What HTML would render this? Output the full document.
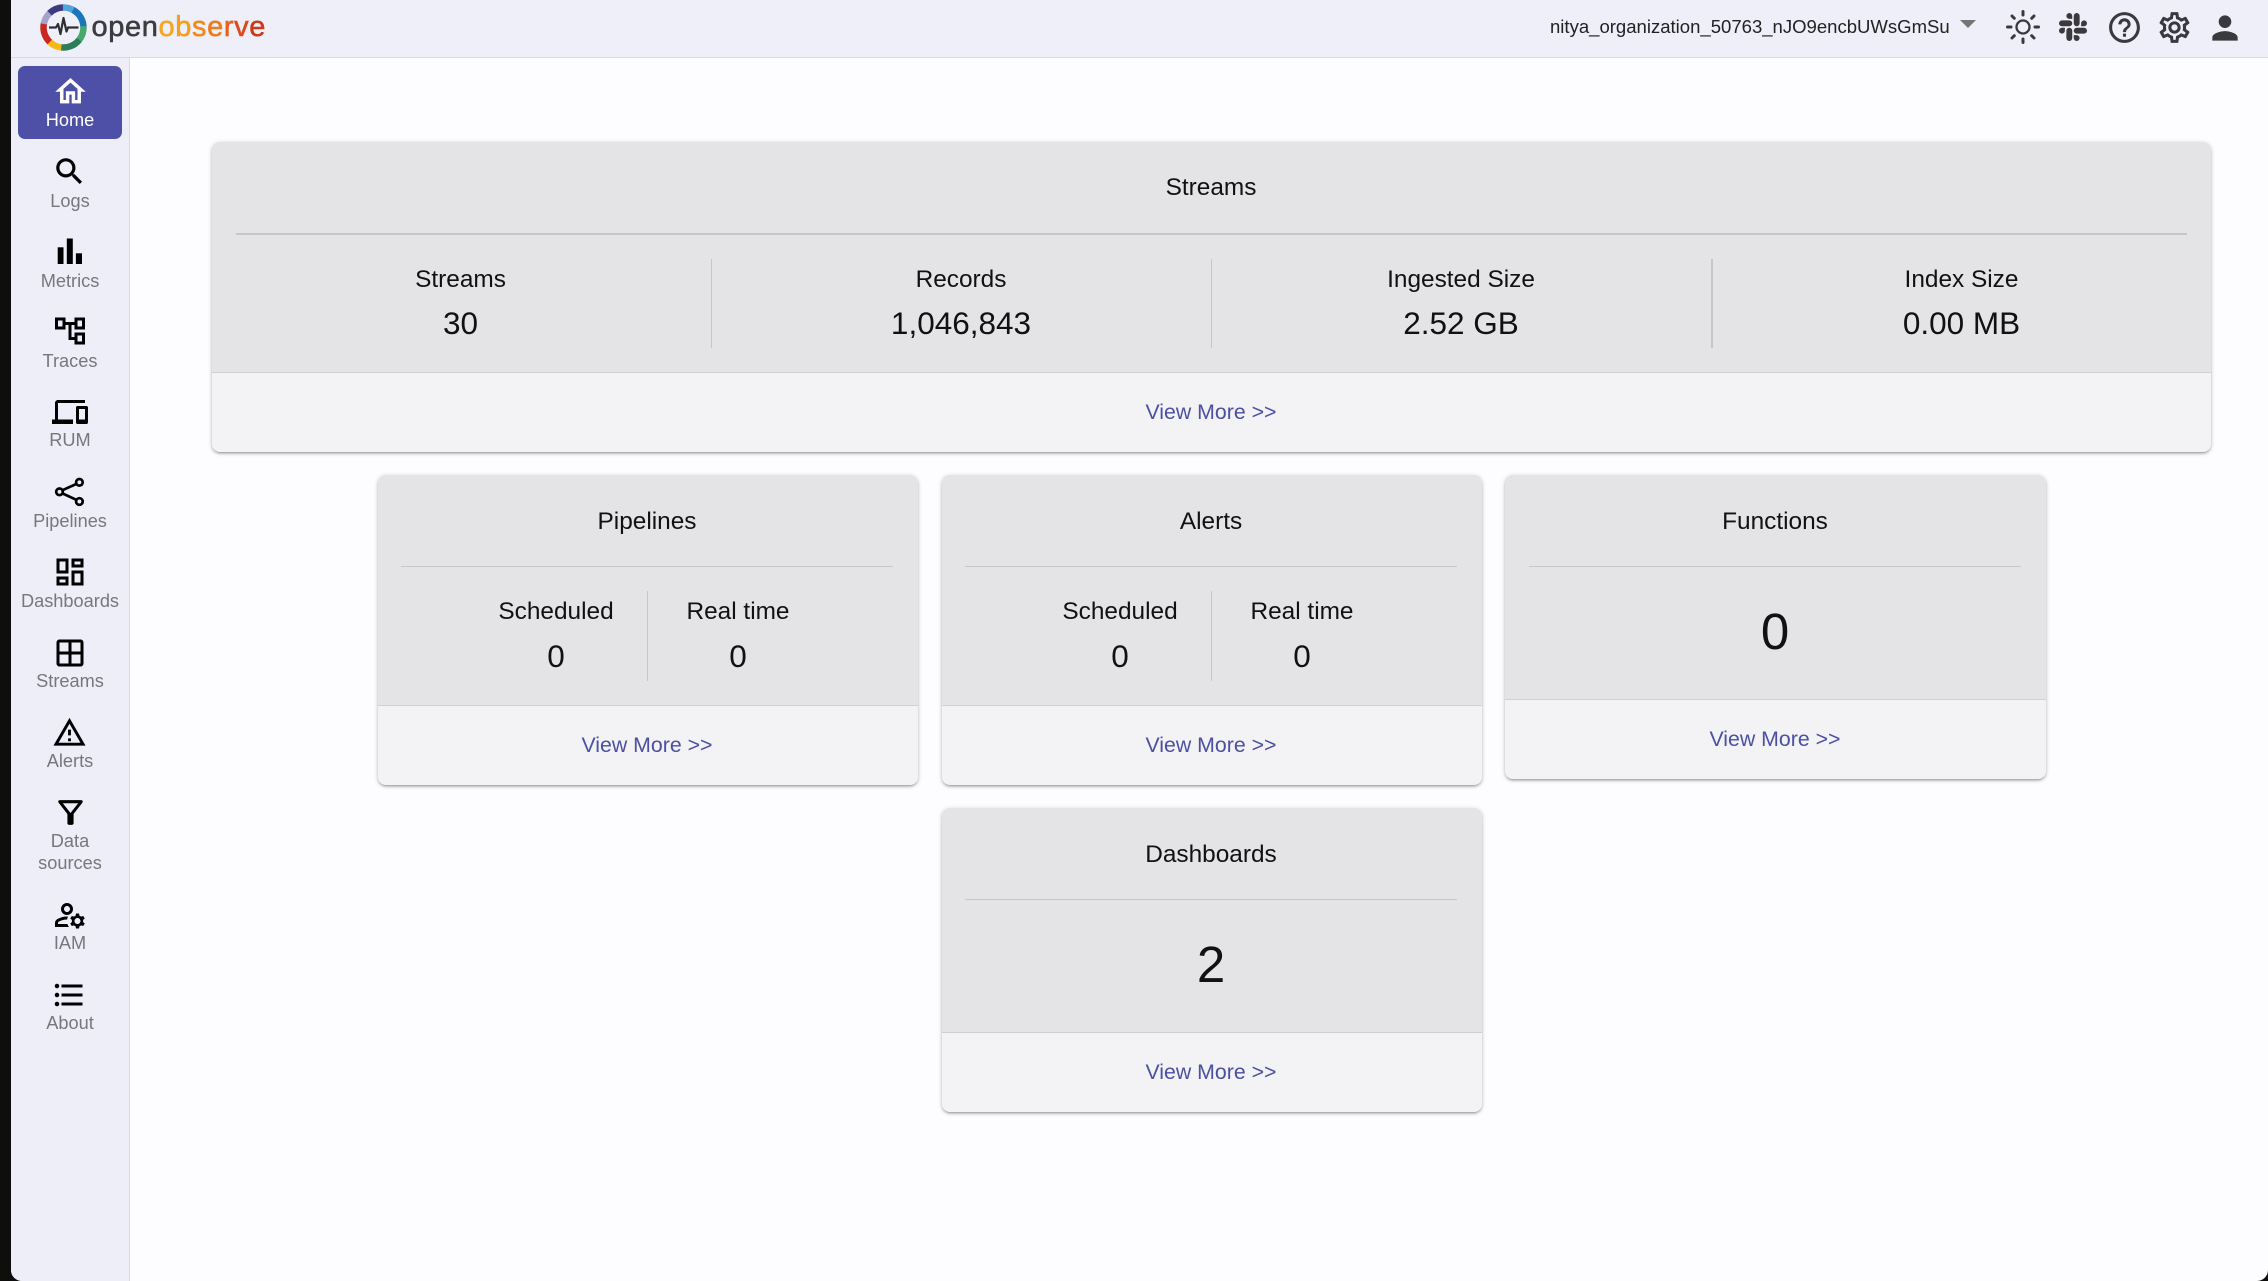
<!DOCTYPE html>
<html lang="en"><head><meta charset="utf-8"><title>OpenObserve</title>
<style>
html,body{margin:0;padding:0;width:2268px;height:1281px;overflow:hidden;background:#0e0f0d;font-family:"Liberation Sans",sans-serif}
#app{position:absolute;left:10.5px;top:0;width:2257.5px;height:1281px;background:#fdfcfe;border-radius:0 0 11px 11px;overflow:hidden}
#root{position:absolute;left:-10.5px;top:0;width:2268px;height:1281px}
#hdr{position:absolute;left:0;top:0;width:2268px;height:57px;background:#eeeff8;border-bottom:1.5px solid #d9d9de}
#side{position:absolute;left:0;top:58px;width:129px;height:1223px;background:#edeef8;border-right:1.5px solid #d9d9de}
#act{position:absolute;left:18px;top:66px;width:103.5px;height:72.5px;background:#4d50a6;border-radius:7px}
svg{position:absolute;display:block}
.t{position:absolute;white-space:nowrap;transform:translateX(-50%);text-align:center;color:#111}
.n{font-size:18.2px;line-height:22px;height:22px;color:#77777d}
.card{position:absolute;background:#e4e3e6;border-radius:8px;box-shadow:0 1px 5px rgba(0,0,0,.2),0 2px 2px rgba(0,0,0,.14),0 3px 1px -2px rgba(0,0,0,.12)}
.foot{position:absolute;left:0;right:0;bottom:0;background:#f3f3f5;border-top:1.5px solid #d0cfd3;border-radius:0 0 8px 8px;box-sizing:border-box}
.h{position:absolute;height:1.5px;background:#c6c5c9}
.v{position:absolute;width:1.5px;background:#c6c5c9}
.l{font-size:24.4px;line-height:40px;height:40px;color:#111}
.d{font-size:31.5px;line-height:40px;height:40px;color:#111}
.b{font-size:51px;line-height:60px;height:60px;color:#111}
.m{font-size:21.3px;line-height:30px;height:30px;color:#4b50a2}
</style></head><body>
<div id="app"><div id="root">
<div id="hdr"></div>
<div id="side"></div>
<div id="act"></div>

<!-- logo -->
<svg style="left:36px;top:0" width="56" height="56" viewBox="36 0 56 56" fill="none">
<g stroke-width="6.5">
<circle cx="63.5" cy="27.5" r="20" stroke="#3c3a80" pathLength="360" stroke-dasharray="44 316" transform="rotate(-134 63.5 27.5)"/>
<circle cx="63.5" cy="27.5" r="20" stroke="#4fa6dc" pathLength="360" stroke-dasharray="30 330" transform="rotate(-90 63.5 27.5)"/>
<circle cx="63.5" cy="27.5" r="20" stroke="#1b75bb" pathLength="360" stroke-dasharray="58 302" transform="rotate(-60 63.5 27.5)"/>
<circle cx="63.5" cy="27.5" r="20" stroke="#46a86c" pathLength="360" stroke-dasharray="42 318" transform="rotate(-2 63.5 27.5)"/>
<circle cx="63.5" cy="27.5" r="20" stroke="#2e7d5a" pathLength="360" stroke-dasharray="58 302" transform="rotate(40 63.5 27.5)"/>
<circle cx="63.5" cy="27.5" r="20" stroke="#f6b81a" pathLength="360" stroke-dasharray="37 323" transform="rotate(98 63.5 27.5)"/>
<circle cx="63.5" cy="27.5" r="20" stroke="#c9281e" pathLength="360" stroke-dasharray="57 303" transform="rotate(135 63.5 27.5)"/>
<circle cx="63.5" cy="27.5" r="20" stroke="#a3a3cc" pathLength="360" stroke-dasharray="34 326" transform="rotate(192 63.5 27.5)"/>
</g>
<path d="M49 27.5H56L58 24l2.5 10 3-16 3 13.5 1.500-4H78.500" stroke="#2f2f33" stroke-width="2.200" stroke-linejoin="round"/>
</svg>
<div style="position:absolute;left:91.5px;top:6px;font-size:29px;line-height:42px;letter-spacing:.62px;color:#3c3c3e;white-space:nowrap;-webkit-text-stroke:.55px currentColor">open<span style="color:#f5a623">o</span><span style="color:#f3a01e">b</span><span style="color:#f08a1e">s</span><span style="color:#ee7a1f">e</span><span style="color:#e8601c">r</span><span style="color:#dd4a1a">v</span><span style="color:#cc3a17">e</span></div>

<!-- header right -->
<div style="position:absolute;left:1550px;top:14px;font-size:18.55px;line-height:26px;color:#222;white-space:nowrap">nitya_organization_50763_nJO9encbUWsGmSu</div>
<svg style="left:1960px;top:20px" width="16" height="8" viewBox="0 0 16 8"><path d="M0 0h16L8 8z" fill="#757575"/></svg>
<svg style="left:2005px;top:9px" width="36" height="36" viewBox="0 0 36 36" fill="none" stroke="#3a3a3e" stroke-linecap="round"><circle cx="18" cy="18" r="6.500" stroke-width="2.300"/><g stroke-width="3"><path d="M18 2.500v3.500M18 30v3.500M2.500 18H6M30 18h3.500M7 7l2.300 2.300M26.700 26.700L29 29M7 29l2.300-2.300M26.700 9.300L29 7"/></g></svg>
<svg style="left:2059px;top:13px" width="28" height="28" viewBox="0 0 24 24" fill="#3a3a3e"><path d="M5.042 15.165a2.528 2.528 0 0 1-2.52 2.523A2.528 2.528 0 0 1 0 15.165a2.527 2.527 0 0 1 2.522-2.52h2.52v2.52zM6.313 15.165a2.527 2.527 0 0 1 2.521-2.52 2.527 2.527 0 0 1 2.521 2.52v6.313A2.528 2.528 0 0 1 8.834 24a2.528 2.528 0 0 1-2.521-2.522v-6.313zM8.834 5.042a2.528 2.528 0 0 1-2.521-2.52A2.528 2.528 0 0 1 8.834 0a2.528 2.528 0 0 1 2.521 2.522v2.52H8.834zM8.834 6.313a2.528 2.528 0 0 1 2.521 2.521 2.528 2.528 0 0 1-2.521 2.521H2.522A2.528 2.528 0 0 1 0 8.834a2.528 2.528 0 0 1 2.522-2.521h6.312zM18.956 8.834a2.528 2.528 0 0 1 2.522-2.521A2.528 2.528 0 0 1 24 8.834a2.528 2.528 0 0 1-2.522 2.521h-2.522V8.834zM17.688 8.834a2.528 2.528 0 0 1-2.523 2.521 2.527 2.527 0 0 1-2.52-2.521V2.522A2.527 2.527 0 0 1 15.165 0a2.528 2.528 0 0 1 2.523 2.522v6.312zM15.165 18.956a2.528 2.528 0 0 1 2.523 2.522A2.528 2.528 0 0 1 15.165 24a2.527 2.527 0 0 1-2.52-2.522v-2.522h2.52zM15.165 17.688a2.527 2.527 0 0 1-2.52-2.523 2.526 2.526 0 0 1 2.52-2.52h6.313A2.527 2.527 0 0 1 24 15.165a2.528 2.528 0 0 1-2.522 2.523h-6.313z"/></svg>
<svg style="left:2106px;top:9px" width="37" height="37" viewBox="0 0 24 24" fill="#3a3a3e"><path d="M11 18h2v-2h-2v2zm1-16C6.480 2 2 6.480 2 12s4.480 10 10 10 10-4.480 10-10S17.520 2 12 2zm0 18c-4.410 0-8-3.590-8-8s3.590-8 8-8 8 3.590 8 8-3.590 8-8 8zm0-14c-2.210 0-4 1.790-4 4h2c0-1.100.9-2 2-2s2 .9 2 2c0 2-3 1.750-3 5h2c0-2.250 3-2.500 3-5 0-2.210-1.790-4-4-4z"/></svg>
<svg style="left:2156px;top:9px" width="37" height="37" viewBox="0 0 24 24" fill="#3a3a3e"><path d="M19.43 12.98c.04-.32.07-.64.07-.98 0-.34-.03-.66-.07-.98l2.11-1.65c.19-.15.24-.42.12-.64l-2-3.46c-.09-.16-.26-.25-.44-.25-.06 0-.12.01-.17.03l-2.49 1c-.52-.4-1.08-.73-1.69-.98l-.38-2.65C14.46 2.18 14.25 2 14 2h-4c-.25 0-.46.18-.49.42l-.38 2.65c-.61.25-1.17.59-1.69.98l-2.49-1c-.06-.02-.12-.03-.18-.03-.17 0-.34.09-.43.25l-2 3.46c-.13.22-.07.49.12.64l2.11 1.65c-.04.32-.07.65-.07.98 0 .33.03.66.07.98l-2.11 1.65c-.19.15-.24.42-.12.64l2 3.46c.09.16.26.25.44.25.06 0 .12-.01.17-.03l2.49-1c.52.4 1.08.73 1.69.98l.38 2.65c.03.24.24.42.49.42h4c.25 0 .46-.18.49-.42l.38-2.65c.61-.25 1.17-.59 1.69-.98l2.49 1c.06.02.12.03.18.03.17 0 .34-.09.43-.25l2-3.46c.12-.22.07-.49-.12-.64l-2.11-1.65zm-1.98-1.71c.04.31.05.52.05.73 0 .21-.02.43-.05.73l-.14 1.13.89.7 1.08.84-.7 1.21-1.27-.51-1.04-.42-.9.68c-.43.32-.84.56-1.25.73l-1.06.43-.16 1.13-.2 1.35h-1.4l-.19-1.35-.16-1.13-1.06-.43c-.43-.18-.83-.41-1.23-.71l-.91-.7-1.06.43-1.27.51-.7-1.21 1.08-.84.89-.7-.14-1.13c-.03-.31-.05-.54-.05-.74s.02-.43.05-.73l.14-1.13-.89-.7-1.08-.84.7-1.21 1.27.51 1.04.42.9-.68c.43-.32.84-.56 1.25-.73l1.06-.43.16-1.13.2-1.35h1.39l.19 1.35.16 1.13 1.06.43c.43.18.83.41 1.23.71l.91.7 1.06-.43 1.27-.51.7 1.21-1.07.85-.89.7.14 1.13zM12 8c-2.21 0-4 1.79-4 4s1.79 4 4 4 4-1.79 4-4-1.790-4-4-4zm0 6c-1.100 0-2-.9-2-2s.9-2 2-2 2 .9 2 2-.9 2-2 2z"/></svg>
<svg style="left:2206px;top:8.500px" width="38" height="38" viewBox="0 0 24 24" fill="#3a3a3e"><path d="M12 12c2.210 0 4-1.790 4-4s-1.790-4-4-4-4 1.790-4 4 1.790 4 4 4zm0 2c-2.670 0-8 1.340-8 4v2h16v-2c0-2.660-5.330-4-8-4z"/></svg>

<!-- nav icons -->
<svg style="left:52.500px;top:74px" width="35" height="35" viewBox="0 0 24 24" fill="#fff" stroke="#fff" stroke-width=".35"><path d="M12 5.690l5 4.500V18h-2v-6H9v6H7v-7.810l5-4.500M12 3L2 12h3v8h6v-6h2v6h6v-8h3L12 3z"/></svg>
<svg style="left:52px;top:153.700px" width="35" height="35" viewBox="0 0 24 24" fill="#000" stroke="#000" stroke-width=".2"><path d="M15.500 14h-.79l-.28-.27C15.410 12.590 16 11.110 16 9.500 16 5.910 13.090 3 9.500 3S3 5.910 3 9.500 5.910 16 9.500 16c1.610 0 3.090-.59 4.230-1.570l.27.28v.79l5 4.990L20.490 19l-4.990-5zm-6 0C7.010 14 5 11.990 5 9.500S7.010 5 9.500 5 14 7.010 14 9.500 11.990 14 9.500 14z"/></svg>
<svg style="left:50px;top:231px" width="40" height="40" viewBox="50 231 40 40" fill="#000"><rect x="57.700" y="247.300" width="5.800" height="16.700"/><rect x="66.800" y="238.500" width="6" height="25.500"/><rect x="75.900" y="253.300" width="6.100" height="10.700"/></svg>
<svg style="left:52px;top:313px" width="36" height="36" viewBox="0 0 24 24" fill="#000"><path d="M22 11V3h-7v3H9V3H2v8h7V8h2v10h4v3h7v-8h-7v3h-2V8h2v3h7zM7 9H4V5h3v4zm10 6h3v4h-3v-4zm0-10h3v4h-3V5z"/></svg>
<svg style="left:52px;top:394px" width="36" height="36" viewBox="0 0 24 24" fill="#000"><path d="M4 6h18V4H4c-1.100 0-2 .9-2 2v11H0v3h14v-3H4V6zm19 2h-6c-.55 0-1 .45-1 1v10c0 .55.45 1 1 1h6c.55 0 1-.45 1-1V9c0-.55-.45-1-1-1zm-1 9h-4v-7h4v7z"/></svg>
<svg style="left:50px;top:472px" width="40" height="40" viewBox="50 472 40 40" fill="none" stroke="#000" stroke-width="2.700"><circle cx="59.500" cy="491.800" r="3.300"/><circle cx="79.400" cy="482.300" r="3.300"/><circle cx="79.400" cy="501.500" r="3.300"/><path d="M62.500 490.200L76.300 484M62.500 493.400L76.300 499.800"/></svg>
<svg style="left:52px;top:554px" width="36" height="36" viewBox="0 0 24 24" fill="#000"><path d="M19 5v2h-4V5h4M9 5v6H5V5h4m10 8v6h-4v-6h4M9 17v2H5v-2h4M21 3h-8v6h8V3zM11 3H3v10h8V3zm10 8h-8v10h8V11zm-10 4H3v6h8v-6z"/></svg>
<svg style="left:52px;top:634.500px" width="36" height="36" viewBox="0 0 24 24" fill="#000"><path d="M19 3H5c-1.100 0-2 .9-2 2v14c0 1.100.9 2 2 2h14c1.100 0 2-.9 2-2V5c0-1.100-.9-2-2-2zm-8 16H5v-6h6v6zm0-8H5V5h6v6zm8 8h-6v-6h6v6zm0-8h-6V5h6v6z"/></svg>
<svg style="left:52px;top:714.700px" width="35" height="35" viewBox="0 0 24 24" fill="#000"><path d="M12 5.990L19.530 19H4.470L12 5.990M12 2L1 21h22L12 2zm1 14h-2v2h2v-2zm0-6h-2v4h2v-4z"/></svg>
<svg style="left:51.500px;top:794px" width="37" height="37" viewBox="0 0 24 24" fill="#000"><path d="M7 6h10l-5.010 6.300L7 6zm-2.750-.39C6.270 8.200 10 13 10 13v6c0 .55.45 1 1 1h2c.55 0 1-.45 1-1v-6s3.720-4.800 5.740-7.390c.51-.66.04-1.610-.79-1.610H5.040c-.83 0-1.300.95-.79 1.610z"/></svg>
<svg style="left:52px;top:897px" width="36" height="36" viewBox="0 0 24 24" fill="#000"><path d="M4 18v-.65c0-.34.16-.66.41-.81C6.100 15.530 8.030 15 10 15c.03 0 .05 0 .08.01.1-.7.3-1.370.59-1.980-.22-.02-.44-.03-.67-.03-2.420 0-4.680.67-6.610 1.820-.88.52-1.390 1.500-1.390 2.530V20h9.260c-.42-.6-.75-1.280-.97-2H4zM10 12c2.210 0 4-1.790 4-4s-1.790-4-4-4-4 1.790-4 4 1.790 4 4 4zm0-6c1.100 0 2 .9 2 2s-.9 2-2 2-2-.9-2-2 .9-2 2-2z"/><path d="M20.750 16c0-.22-.03-.42-.06-.63l1.140-1.010-1-1.730-1.450.49c-.32-.27-.68-.48-1.080-.63L18 11h-2l-.3 1.490c-.4.15-.76.36-1.080.63l-1.450-.49-1 1.730 1.140 1.010c-.03.21-.06.41-.06.63s.03.42.06.63l-1.140 1.010 1 1.730 1.450-.49c.32.27.68.48 1.080.63L16 21h2l.3-1.490c.4-.15.76-.36 1.080-.63l1.450.49 1-1.730-1.140-1.010c.03-.21.06-.41.06-.63zM17 18c-1.100 0-2-.9-2-2s.9-2 2-2 2 .9 2 2-.9 2-2 2z"/></svg>
<svg style="left:51.400px;top:976.700px" width="36" height="36" viewBox="0 0 24 24" fill="#000"><path d="M4 10.500c-.83 0-1.500.67-1.500 1.500s.67 1.500 1.500 1.500 1.500-.67 1.500-1.500-.67-1.500-1.500-1.500zm0-6c-.83 0-1.500.67-1.500 1.500S3.170 7.500 4 7.500 5.500 6.830 5.500 6 4.830 4.500 4 4.500zm0 12c-.83 0-1.500.68-1.500 1.500s.68 1.500 1.500 1.500 1.500-.68 1.500-1.500-.67-1.500-1.500-1.500zM7 19h14v-2H7v2zm0-6h14v-2H7v2zm0-8v2h14V5H7z"/></svg>

<!-- nav labels -->
<div class="t n" style="left:70px;top:109px;color:#fff">Home</div>
<div class="t n" style="left:70px;top:189.500px">Logs</div>
<div class="t n" style="left:70px;top:270px">Metrics</div>
<div class="t n" style="left:70px;top:349.500px">Traces</div>
<div class="t n" style="left:70px;top:429px">RUM</div>
<div class="t n" style="left:70px;top:510px">Pipelines</div>
<div class="t n" style="left:70px;top:590px">Dashboards</div>
<div class="t n" style="left:70px;top:670px">Streams</div>
<div class="t n" style="left:70px;top:750px">Alerts</div>
<div class="t n" style="left:70px;top:830px">Data</div>
<div class="t n" style="left:70px;top:852px">sources</div>
<div class="t n" style="left:70px;top:932px">IAM</div>
<div class="t n" style="left:70px;top:1012px">About</div>

<!-- cards -->
<div class="card" style="left:211.500px;top:142px;width:1999.500px;height:309.500px"><div class="foot" style="height:79.500px"></div></div>
<div class="h" style="left:236px;top:233px;width:1951px"></div>
<div class="v" style="left:710.500px;top:258.500px;height:89px"></div>
<div class="v" style="left:1210.500px;top:258.500px;height:89px"></div>
<div class="v" style="left:1711px;top:258.500px;height:89px"></div>
<div class="t l" style="left:1211px;top:168px">Streams</div>
<div class="t l" style="left:460.500px;top:259.500px">Streams</div>
<div class="t d" style="left:460.500px;top:303px">30</div>
<div class="t l" style="left:961px;top:259.500px">Records</div>
<div class="t d" style="left:961px;top:303px">1,046,843</div>
<div class="t l" style="left:1461px;top:259.500px">Ingested Size</div>
<div class="t d" style="left:1461px;top:303px">2.52 GB</div>
<div class="t l" style="left:1961.500px;top:259.500px">Index Size</div>
<div class="t d" style="left:1961.500px;top:303px">0.00 MB</div>
<div class="t m" style="left:1211px;top:397px">View More &gt;&gt;</div>

<div class="card" style="left:377.500px;top:475px;width:540px;height:309.500px"><div class="foot" style="height:79.500px"></div></div>
<div class="h" style="left:401px;top:565.500px;width:492px"></div>
<div class="v" style="left:646.700px;top:591px;height:90px"></div>
<div class="t l" style="left:647px;top:501.500px">Pipelines</div>
<div class="t l" style="left:556px;top:592px">Scheduled</div>
<div class="t d" style="left:556px;top:636px">0</div>
<div class="t l" style="left:738px;top:592px">Real time</div>
<div class="t d" style="left:738px;top:636px">0</div>
<div class="t m" style="left:647px;top:730px">View More &gt;&gt;</div>

<div class="card" style="left:941.500px;top:475px;width:540px;height:309.500px"><div class="foot" style="height:79.500px"></div></div>
<div class="h" style="left:965px;top:565.500px;width:492px"></div>
<div class="v" style="left:1210.500px;top:591px;height:90px"></div>
<div class="t l" style="left:1211px;top:501.500px">Alerts</div>
<div class="t l" style="left:1120px;top:592px">Scheduled</div>
<div class="t d" style="left:1120px;top:636px">0</div>
<div class="t l" style="left:1302px;top:592px">Real time</div>
<div class="t d" style="left:1302px;top:636px">0</div>
<div class="t m" style="left:1211px;top:730px">View More &gt;&gt;</div>

<div class="card" style="left:1505px;top:475px;width:540.500px;height:304px"><div class="foot" style="height:80px"></div></div>
<div class="h" style="left:1529px;top:565.500px;width:492px"></div>
<div class="t l" style="left:1775px;top:501.500px">Functions</div>
<div class="t b" style="left:1775px;top:601.500px">0</div>
<div class="t m" style="left:1775px;top:724px">View More &gt;&gt;</div>

<div class="card" style="left:941.500px;top:808px;width:540px;height:303.500px"><div class="foot" style="height:79.500px"></div></div>
<div class="h" style="left:965px;top:898.500px;width:492px"></div>
<div class="t l" style="left:1211px;top:834.500px">Dashboards</div>
<div class="t b" style="left:1211px;top:935px">2</div>
<div class="t m" style="left:1211px;top:1057px">View More &gt;&gt;</div>
</div></div>
</body></html>
